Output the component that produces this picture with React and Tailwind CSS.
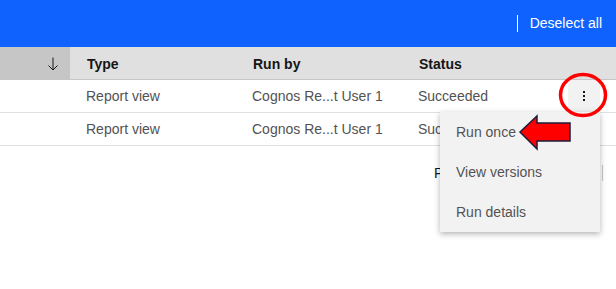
import React from 'react';

const rows = [
  { type: 'Report view', runBy: 'Cognos Re...t User 1', status: 'Succeeded' },
  { type: 'Report view', runBy: 'Cognos Re...t User 1', status: 'Succeeded' },
];

const menuItems = ['Run once', 'View versions', 'Run details'];

const App = () => {
  return (
    <div
      className="relative w-[616px] h-[289px] overflow-hidden bg-white text-[14px]"
      style={{ fontFamily: '"Liberation Sans", Arial, sans-serif' }}
    >
      {/* Batch action bar */}
      <div className="h-[47px] bg-[#0f62fe] flex items-center justify-end pr-[14px]">
        <div className="w-px h-[17px] bg-white mr-[12px]" />
        <span className="text-white">Deselect all</span>
      </div>

      {/* Table header */}
      <div className="h-[33px] bg-[#e0e0e0] flex border-b border-[#c6c6c6]">
        <div className="w-[70px] bg-[#c6c6c6] flex items-center justify-end pr-[9px] pt-[2px]">
          <svg width="16" height="16" viewBox="0 0 16 16" fill="none" stroke="#161616" strokeWidth="1">
            <path d="M8 1.5v12.5M3.5 9.5L8 14l4.5-4.5" />
          </svg>
        </div>
        <div className="w-[167px] pl-[17px] pt-[3px] flex items-center font-bold text-[#161616]">Type</div>
        <div className="w-[166px] pl-[16px] pt-[3px] flex items-center font-bold text-[#161616]">Run by</div>
        <div className="flex-1 pl-[16px] pt-[3px] flex items-center font-bold text-[#161616]">Status</div>
      </div>

      {/* Rows */}
      {rows.map((r, i) => (
        <div key={i} className="h-[33px] flex border-b border-[#e0e0e0] text-[#525252]">
          <div className="w-[70px]" />
          <div className="w-[167px] pl-[16px] pt-px flex items-center">{r.type}</div>
          <div className="w-[166px] pl-[15px] pt-px flex items-center">{r.runBy}</div>
          <div className="w-[165px] pl-[15px] pt-px flex items-center">{r.status}</div>
          {i === 0 && (
            <div className="w-[32px] bg-[#f2f2f2] flex flex-col items-center justify-center gap-[2px]">
              <span className="w-[2px] h-[2px] bg-[#161616]" />
              <span className="w-[2px] h-[2px] bg-[#161616]" />
              <span className="w-[2px] h-[2px] bg-[#161616]" />
            </div>
          )}
        </div>
      ))}

      {/* Pagination (mostly hidden under the menu) */}
      <div className="h-[54px] flex items-center text-[#161616]">
        <span className="ml-[434px]">Page 1 of 1</span>
        <div className="ml-auto mr-[13px] w-px h-[16px] bg-[#c6c6c6]" />
      </div>

      {/* Overflow menu */}
      <div className="absolute left-[440px] top-[112px] w-[160px] bg-[#f2f2f2] shadow-[0_2px_6px_rgba(0,0,0,0.3)]">
        {menuItems.map((m) => (
          <div key={m} className="h-[40px] px-4 flex items-center text-[#525252]">
            {m}
          </div>
        ))}
      </div>

      {/* Annotation */}
      <svg className="absolute inset-0 pointer-events-none" width="616" height="289">
        <ellipse cx="583" cy="95" rx="22.5" ry="20.5" fill="none" stroke="#ff0000" strokeWidth="3.5" />
        <polygon
          points="520,132 537,116 537,123 570,123 570,141 537,141 537,149"
          fill="#ff0000"
          stroke="#1c1c3c"
          strokeWidth="1.5"
          strokeLinejoin="miter"
        />
      </svg>
    </div>
  );
};

export default App;
